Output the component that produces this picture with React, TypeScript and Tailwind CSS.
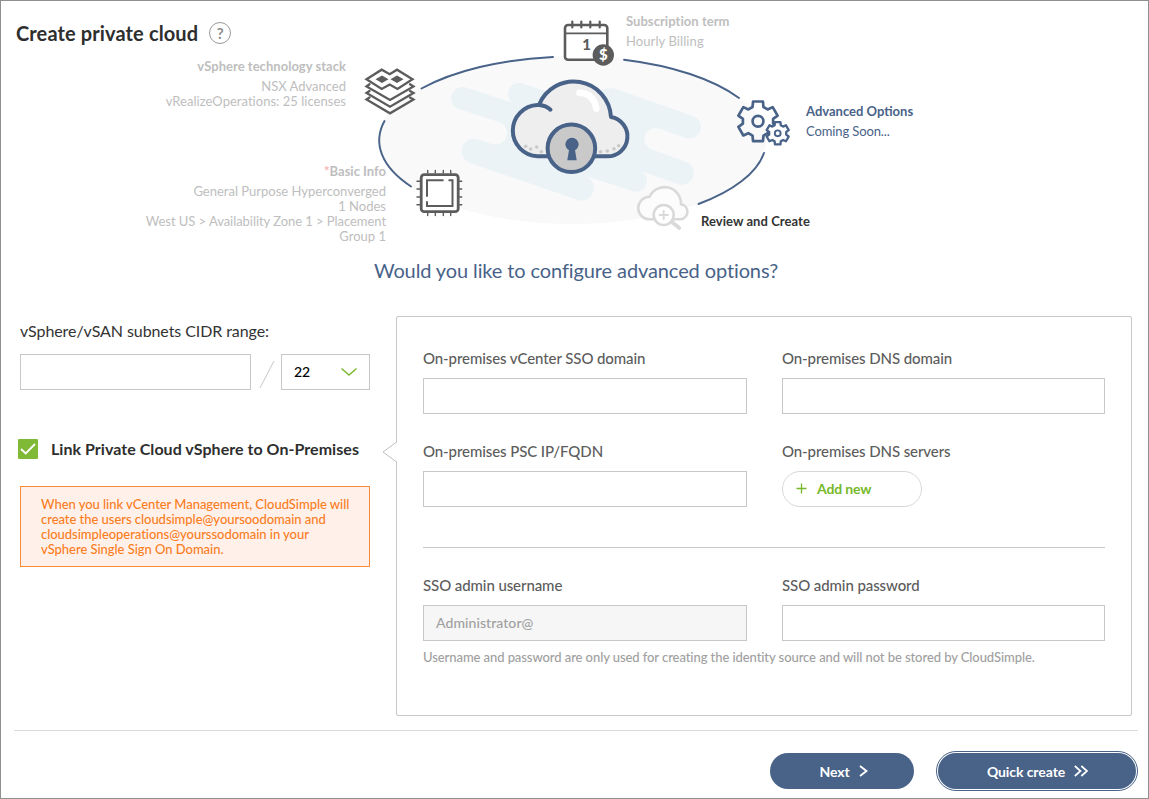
import React from "react";

const NAVY = "#486288";
const IRON = "#5c5c5c";

function gearPath(cx: number, cy: number, outer: number, inner: number): string {
  const parts: string[] = [];
  for (let i = 0; i < 6; i++) {
    const mid = -90 + i * 60;
    const points: [number, number][] = [
      [inner, mid - 21],
      [outer, mid - 14],
      [outer, mid + 14],
      [inner, mid + 21],
    ];
    points.forEach(([r, a]) => {
      const rad = (a * Math.PI) / 180;
      const x = (cx + r * Math.cos(rad)).toFixed(2);
      const y = (cy + r * Math.sin(rad)).toFixed(2);
      parts.push(`${parts.length ? "L" : "M"}${x} ${y}`);
    });
  }
  return parts.join(" ") + "Z";
}

const cloudDots = [
  [525.7, 146.3],
  [530.7, 149],
  [536.7, 147],
  [541.3, 151.7],
  [600.5, 151.7],
  [607.3, 151],
  [614, 148.7],
  [618.7, 145.7],
];

function Diagram() {
  return (
    <svg
      className="absolute top-0 left-0"
      width="1149"
      height="250"
      viewBox="0 0 1149 250"
      fill="none"
      strokeLinecap="round"
      strokeLinejoin="round"
    >
      <ellipse cx="572" cy="140" rx="194" ry="84" fill="#f9f9f9" />
      <path
        fill="#ebf3f7"
        d="M466 87.5L513 103A10 10 0 0 1 525 84.5L560 96L613 88L693 116A11.5 11.5 0 0 1 686 138L659 128.5A11 11 0 0 0 652 149.5L686 162A11.5 11.5 0 0 1 678 184L641 171A10 10 0 0 1 631 190.5L587 176.5A11.5 11.5 0 0 1 575 199L470 163A11.5 11.5 0 0 1 478 139.5L492 144A11.2 11.2 0 0 0 499 122L459 109A11.3 11.3 0 0 1 466 87.5Z"
      />
      <g stroke={NAVY} strokeWidth="1.9">
        <path d="M421.5 88.5A194 84 0 0 1 553 57" />
        <path d="M624 59.7A194 84 0 0 1 739 98" />
        <path d="M764 153A194 84 0 0 1 698.5 204" />
        <path d="M384.5 121A194 84 0 0 0 411 186.5" />
      </g>

      {/* private cloud */}
      <path
        d="M537.5 156.3A25.72 25.72 0 0 1 537.5 104.9L539 104.9A37.4 37.4 0 0 1 611 117A19.8 19.8 0 0 1 607 156.3Z"
        fill="#eeeeee"
        stroke={NAVY}
        strokeWidth="4"
      />
      <path d="M539 104.9Q546 105.3 550.5 109.7" stroke={NAVY} strokeWidth="4" />
      <path d="M579.5 92.8Q594 93.5 596.3 108.7" stroke="#fff" strokeWidth="6.5" />
      {cloudDots.map(([x, y]) => (
        <circle key={x} cx={x} cy={y} r="1.8" fill="#c9c9c9" />
      ))}
      <circle cx="571.4" cy="148.3" r="23.8" fill="#c9c9c9" stroke={NAVY} strokeWidth="4" />
      <circle cx="572" cy="144.3" r="6.6" fill={NAVY} />
      <path d="M569.5 147H574.5L576.7 160.3H567.3Z" fill={NAVY} />

      {/* technology stack */}
      <g stroke={IRON} strokeWidth="2.3" strokeLinejoin="miter">
        <path d="M366.5 79.3L381.7 69.7L389.7 74.2L397 69.7L412.5 79.3L397.5 89L389.7 84.5L381.7 89Z" />
        <path d="M369.5 84.3L366.5 86.5L390 100L413.5 86.5L410 84.3" />
        <path d="M369.5 91L366.5 93L390 106.7L413.5 93L410 91" />
        <path d="M369.5 97.5L366.5 99.5L390 113.3L413.5 99.5L410 97.5" />
      </g>
      <path d="M375.5 79.3L382 75.6L388.5 79.3L382 83ZM390.5 79.3L397 75.6L403.5 79.3L397 83Z" fill={IRON} />

      {/* chip */}
      <rect x="421.2" y="174.7" width="37" height="37" rx="3" fill="#fff" stroke={IRON} strokeWidth="2.8" />
      <path
        d="M442.8 180.3H427V196M427 202V206H452.5V180.3H449.3"
        stroke={IRON}
        strokeWidth="2"
        strokeLinejoin="miter"
      />
      <path
        d="M427.7 170.5V173M435.3 170.5V173M443.3 170.5V173M450.7 170.5V173M427.7 213V215.5M435.3 213V215.5M443.3 213V215.5M450.7 213V215.5M417 181.3H420M417 189H420M417 197H420M417 204.7H420M459.5 181.3H461.7M459.5 189H461.7M459.5 197H461.7M459.5 204.7H461.7"
        stroke={IRON}
        strokeWidth="1.4"
      />

      {/* calendar */}
      <rect x="565" y="25" width="42.3" height="34.7" rx="3" fill="#fff" stroke={IRON} strokeWidth="2.6" />
      <path d="M565 33.4H607" stroke={IRON} strokeWidth="1.6" />
      <path d="M572.3 21.5V27.5M581.3 21.5V27.5M590.3 21.5V27.5M599.7 21.5V27.5" stroke={IRON} strokeWidth="2.2" />
      <text x="586.5" y="50" textAnchor="middle" fill={IRON} className="font-['Lato'] text-[15px] font-black">
        1
      </text>
      <circle cx="603.3" cy="55" r="10.7" fill={IRON} />
      <text x="603.3" y="60.3" textAnchor="middle" fill="#fff" className="font-['Lato'] text-[15px] font-black">
        $
      </text>

      {/* gears */}
      <g stroke={NAVY}>
        <path d={gearPath(758, 121.3, 20.4, 15.3)} strokeWidth="2.7" />
        <circle cx="758" cy="121.3" r="5.4" strokeWidth="2.7" />
        <path d={gearPath(777.7, 133.3, 11.5, 8.6)} strokeWidth="2.3" fill="#fff" />
        <circle cx="777.7" cy="133.3" r="2.9" strokeWidth="1.9" />
      </g>

      {/* review */}
      <g stroke="#d9d9d9" strokeWidth="2.6">
        <path
          d="M649.5 219.3A11.25 11.25 0 0 1 649.5 196.8A16.5 16.5 0 0 1 681 204.3A7.6 7.6 0 0 1 681 219.3Z"
          fill="#fcfcfc"
        />
        <circle cx="663.7" cy="215" r="10" fill="#fff" />
        <path d="M659.5 215H668M663.7 210.7V219.3" strokeWidth="1.8" />
        <path d="M672.5 222.5L679.3 228" strokeWidth="3.6" />
      </g>
    </svg>
  );
}

function TextBox({ children, disabled }: { children?: React.ReactNode; disabled?: boolean }) {
  return (
    <div
      className={
        disabled
          ? "flex h-9 w-full items-center border border-[#c8c8c8] bg-[#f6f6f6] px-3 pb-0.5 text-[14px] font-medium tracking-[0.07px] text-[#a0a0a0]"
          : "flex h-9 w-full items-center border border-[#c8c8c8] bg-white px-3 text-[14px]"
      }
    >
      {children}
    </div>
  );
}

function Field({ label, children }: { label: string; children: React.ReactNode }) {
  return (
    <div className="flex flex-col">
      <label className="mb-[10px] h-5 text-[15px] leading-5 font-medium tracking-[-0.09px] whitespace-nowrap text-[#5c5c5c]">
        {label}
      </label>
      {children}
    </div>
  );
}

export default function App() {
  return (
    <div className="h-[799px] w-[1149px] overflow-hidden bg-white font-['Lato',sans-serif] text-[#333] outline outline-1 -outline-offset-1 outline-[#8f8f8f]">
      <header className="relative h-[250px] pt-[21px] pl-4">
        <Diagram />
        <div className="flex h-6 items-center gap-[11px]">
          <h1 className="text-[20px] leading-6 font-bold tracking-[0.12px] text-[#2e2e2e]">Create private cloud</h1>
          <span className="flex h-[22px] w-[22px] items-center justify-center rounded-full border-[1.5px] border-[#999] text-[15px] leading-none font-bold text-[#8c8c8c]">
            ?
          </span>
        </div>

        <div className="absolute top-[59px] right-[803px] text-right text-[13px] leading-[15px] whitespace-nowrap text-[#bebebe]">
          <div className="mb-[5px] font-bold tracking-[0.03px]">vSphere technology stack</div>
          <div>NSX Advanced</div>
          <div className="tracking-[0.03px]">vRealizeOperations: 25 licenses</div>
        </div>
        <div className="absolute top-[164px] right-[763px] text-right text-[13px] leading-[15px] whitespace-nowrap text-[#bebebe]">
          <div className="mb-[5px] font-bold">
            <span className="text-[#f5b5b5]">*</span>Basic Info
          </div>
          <div>General Purpose Hyperconverged</div>
          <div>1 Nodes</div>
          <div className="tracking-[-0.05px]">West US &gt; Availability Zone 1 &gt; Placement</div>
          <div>Group 1</div>
        </div>
        <div className="absolute top-[14px] left-[626px] text-[13px] leading-[15px] whitespace-nowrap text-[#bebebe]">
          <div className="mb-[5px] font-bold tracking-[0.05px]">Subscription term</div>
          <div className="tracking-[0.09px]">Hourly Billing</div>
        </div>
        <div className="absolute top-[104px] left-[806px] text-[13px] leading-[15px] whitespace-nowrap text-[#486288]">
          <div className="mb-[5px] font-bold">Advanced Options</div>
          <div className="tracking-[-0.12px]">Coming Soon...</div>
        </div>
        <div className="absolute top-[214px] left-[701px] text-[13px] leading-[15px] font-bold tracking-[0.06px] whitespace-nowrap text-[#333]">
          Review and Create
        </div>
      </header>

      <h2 className="h-[66px] pt-[7px] pl-[3px] text-center text-[20px] leading-[26px] tracking-[-0.11px] text-[#486288]">
        Would you like to configure advanced options?
      </h2>

      <main className="flex h-[400px]">
        <section className="ml-5 w-[350px]">
          <div className="pt-[5px] text-[16px] leading-5 tracking-[-0.08px] text-[#333]">
            vSphere/vSAN subnets CIDR range:
          </div>
          <div className="mt-[13px] flex">
            <div className="h-9 w-[231px] border border-[#c8c8c8]" />
            <svg className="h-9 w-[30px]" viewBox="0 0 30 36" fill="none">
              <path d="M9 34L23 7" stroke="#c8c8c8" />
            </svg>
            <div className="flex h-9 w-[89px] items-center justify-between border border-[#c8c8c8] pr-3 pl-3 text-[14px] font-medium text-black">
              <span className="-mt-0.5 tracking-[-0.1px]">22</span>
              <svg width="16" height="8" viewBox="0 0 16 8" fill="none">
                <path d="M0.5 0.5L8 7L15.5 0.5" stroke="#7ab929" strokeWidth="1.4" />
              </svg>
            </div>
          </div>
          <div className="mt-[49px] -ml-0.5 flex h-5 items-center gap-[13px]">
            <span className="flex h-5 w-5 items-center justify-center rounded-[1px] bg-[#7fb935]">
              <svg width="16" height="12" viewBox="0 0 16 12" fill="none">
                <path d="M1 6L5.7 10.5L15 1" stroke="#fff" strokeWidth="1.8" />
              </svg>
            </span>
            <span className="text-[16px] leading-5 font-bold tracking-[0.04px] whitespace-nowrap text-[#2e2e2e]">
              Link Private Cloud vSphere to On-Premises
            </span>
          </div>
          <div className="mt-[27px] h-[81px] border border-[#fa8b36] bg-[#fff1ea] pt-[10px] pl-5 text-[13px] leading-[15px] font-medium tracking-[-0.04px] whitespace-nowrap text-[#fa7d1e]">
            When you link vCenter Management, CloudSimple will
            <br />
            create the users cloudsimple@yoursoodomain and
            <br />
            cloudsimpleoperations@yourssodomain in your
            <br />
            vSphere Single Sign On Domain.
          </div>
        </section>

        <section className="relative ml-[26px] w-[736px] rounded-[2px] border border-[#c8c8c8] px-[26px] pt-[31px]">
          <svg className="absolute top-[124px] -left-[15px]" width="16" height="22" viewBox="0 0 16 22" fill="none">
            <path d="M15 1.5V20.5" stroke="#fff" strokeWidth="2" />
            <path d="M14.5 0V1L1 11L14.5 21V22" stroke="#c0c0c0" />
          </svg>
          <div className="grid grid-cols-[324px_323px] gap-x-[35px] gap-y-[27px]">
            <Field label="On-premises vCenter SSO domain">
              <TextBox />
            </Field>
            <Field label="On-premises DNS domain">
              <TextBox />
            </Field>
            <Field label="On-premises PSC IP/FQDN">
              <TextBox />
            </Field>
            <Field label="On-premises DNS servers">
              <button className="flex h-9 w-[140px] items-center gap-[10px] rounded-full border border-[#d8d8d8] pb-px pl-[13px] text-[14px] font-bold tracking-[-0.14px] text-[#76b82a]">
                <svg width="11" height="11" viewBox="0 0 11 11" fill="none">
                  <path d="M5.5 0.5V10.5M0.5 5.5H10.5" stroke="#76b82a" strokeWidth="1.3" />
                </svg>
                Add new
              </button>
            </Field>
          </div>
          <div className="mt-10 mb-[27px] h-px bg-[#c8c8c8]" />
          <div className="grid grid-cols-[324px_323px] gap-x-[35px]">
            <Field label="SSO admin username">
              <TextBox disabled>Administrator@</TextBox>
            </Field>
            <Field label="SSO admin password">
              <TextBox />
            </Field>
          </div>
          <p className="mt-[7px] text-[13px] leading-[18px] font-medium tracking-[-0.075px] whitespace-nowrap text-[#a0a0a0]">
            Username and password are only used for creating the identity source and will not be stored by CloudSimple.
          </p>
        </section>
      </main>

      <footer className="mt-[14px] mr-[11px] ml-[14px] flex justify-end gap-6 border-t border-[#d9d9d9] pt-[22px] pr-[2px]">
        <button className="flex h-9 w-36 items-center justify-center gap-[9px] rounded-full bg-[#486288] pl-[3px] text-[14px] font-bold tracking-[-0.1px] text-white">
          Next
          <svg width="9" height="12" viewBox="0 0 9 12" fill="none">
            <path d="M1 1L7.5 6L1 11" stroke="#fff" strokeWidth="1.9" />
          </svg>
        </button>
        <button className="flex h-9 w-[198px] items-center justify-center gap-[9px] rounded-full bg-[#486288] pl-px text-[14px] font-bold tracking-[-0.08px] text-white outline outline-1 outline-offset-1 outline-[#486288]">
          Quick create
          <svg width="14" height="12" viewBox="0 0 14 12" fill="none">
            <path d="M0.8 1L6.5 6L0.8 11M7.3 1L13 6L7.3 11" stroke="#fff" strokeWidth="1.7" />
          </svg>
        </button>
      </footer>
    </div>
  );
}
